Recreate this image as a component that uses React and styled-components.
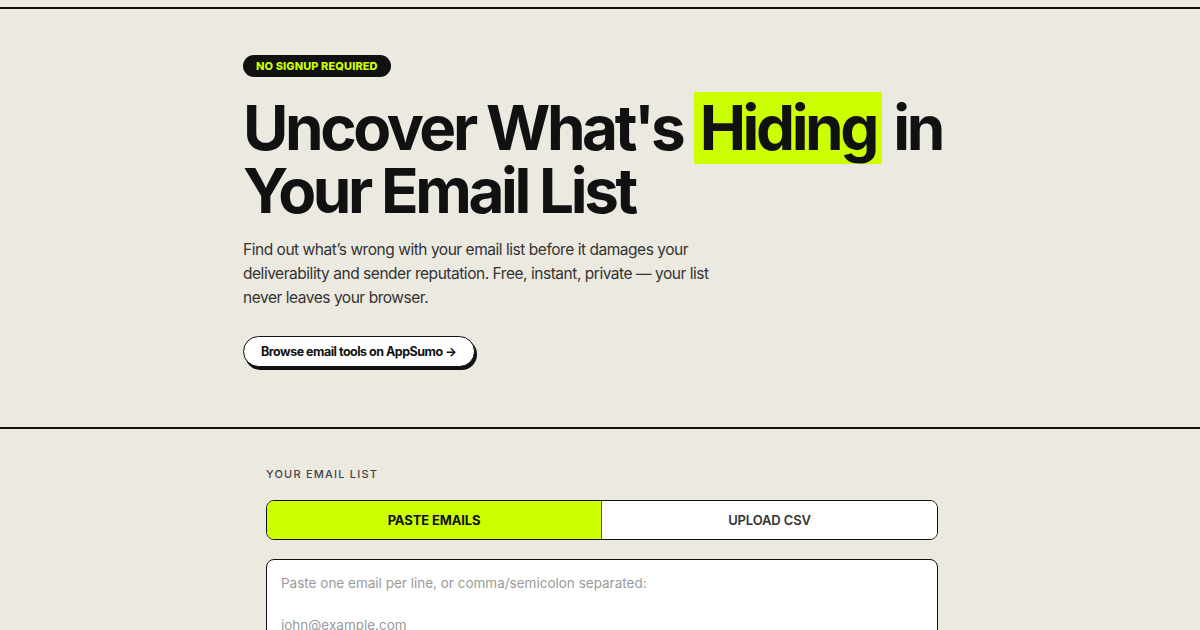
import React from "react";
import styled, { createGlobalStyle } from "styled-components";

const GlobalStyle = createGlobalStyle`
  * { box-sizing: border-box; }
  html, body { margin: 0; padding: 0; }
  body {
    background: #ECE9E1;
    font-family: Inter, "Noto Sans", "Liberation Sans", sans-serif;
    color: #111;
  }
`;

const Page = styled.div`
  min-height: 630px;
  padding-top: 7px;
`;

const Hero = styled.section`
  border-top: 2px solid #111;
  border-bottom: 2px solid #111;
  padding: 46px 0 60px;
`;

const HeroInner = styled.div`
  width: 714px;
  margin: 0 auto;
  display: flex;
  flex-direction: column;
  align-items: flex-start;
`;

const Badge = styled.span`
  display: inline-flex;
  align-items: center;
  height: 22px;
  padding: 0 13px;
  border-radius: 11px;
  background: #111;
  color: #CCFF00;
  font-size: 11px;
  font-weight: 800;
  letter-spacing: 0.01em;
  text-transform: uppercase;
`;

const Title = styled.h1`
  margin: 19px 0 0;
  font-size: 62px;
  line-height: 63px;
  font-weight: 700;
  letter-spacing: -0.055em;
  color: #111;
`;

/* highlighter block behind a word, trimmed a little shorter than the glyph box */
const Mark = styled.span`
  padding: 0 6px;
  border-radius: 2px;
  background-image: linear-gradient(#CCFF00, #CCFF00);
  background-repeat: no-repeat;
  background-position: center 52%;
  background-size: 100% 72px;
`;

const Lead = styled.p`
  margin: 16px 0 0;
  max-width: 472px;
  font-size: 15.5px;
  line-height: 24px;
  color: #333;
  letter-spacing: -0.03em;
`;

const PillButton = styled.a`
  margin-top: 26px;
  display: inline-flex;
  align-items: center;
  height: 31px;
  padding: 0 17px;
  border: 1.5px solid #111;
  border-radius: 16px;
  background: #fff;
  box-shadow: 2px 3px 0 #111;
  color: #111;
  font-size: 12.5px;
  font-weight: 700;
  text-decoration: none;
  letter-spacing: -0.04em;
`;

const Tool = styled.section`
  width: 672px;
  margin-left: calc(50% - 334px);
  padding-top: 38px;
`;

const Label = styled.div`
  font-size: 11px;
  font-weight: 500;
  letter-spacing: 0.11em;
  color: #444;
  text-transform: uppercase;
`;

const Tabs = styled.div`
  margin-top: 19px;
  display: grid;
  grid-template-columns: 1fr 1fr;
  height: 40px;
  border: 1.5px solid #111;
  border-radius: 8px;
  overflow: hidden;
  background: #fff;
`;

const Tab = styled.button`
  border: 0;
  margin: 0;
  padding: 0;
  font-family: inherit;
  font-size: 13px;
  font-weight: ${(p) => (p.$active ? 700 : 600)};
  color: ${(p) => (p.$active ? "#111" : "#333")};
  background: ${(p) => (p.$active ? "#CCFF00" : "#fff")};
  border-right: ${(p) => (p.$active ? "1.5px solid #555" : "0")};
  letter-spacing: -0.01em;
  text-transform: uppercase;
`;

const Input = styled.textarea`
  display: block;
  margin-top: 19px;
  width: 100%;
  height: 120px;
  padding: 13px 14px;
  border: 1.5px solid #111;
  border-radius: 8px;
  background: #fff;
  font-family: inherit;
  font-size: 13.5px;
  line-height: 21px;
  resize: none;
  outline: none;
  &::placeholder { color: #9a9a9a; }
`;

export default function App() {
  return (
    <Page>
      <GlobalStyle />
      <Hero>
        <HeroInner>
          <Badge>No signup required</Badge>
          <Title>
            Uncover What's <Mark>Hiding</Mark> in
            <br />
            Your Email List
          </Title>
          <Lead>
            Find out what’s wrong with your email list before it damages your
            deliverability and sender reputation. Free, instant, private — your
            list never leaves your browser.
          </Lead>
          <PillButton href="#">Browse email tools on AppSumo →</PillButton>
        </HeroInner>
      </Hero>
      <Tool>
        <Label>Your email list</Label>
        <Tabs>
          <Tab $active>Paste emails</Tab>
          <Tab>Upload CSV</Tab>
        </Tabs>
        <Input
          placeholder={
            "Paste one email per line, or comma/semicolon separated:\n\njohn@example.com\njane@example.com"
          }
        />
      </Tool>
    </Page>
  );
}
